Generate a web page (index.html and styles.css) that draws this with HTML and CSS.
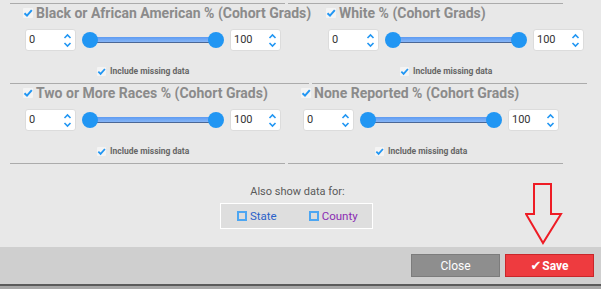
FILE: index.html
```html
<!DOCTYPE html>
<html lang="en">
<head>
  <meta charset="UTF-8">
  <title>Cohort Grads Filters</title>
  <link rel="stylesheet" href="styles.css">
</head>
<body>

<div class="page">
  <div class="main">
    <div class="filters">
      <div class="rule"><span class="seg"></span><span class="seg"></span></div>

      <div class="row">
        <div class="cell">
          <div class="title"><span class="chk"><svg viewBox="0 0 10 10"><path d="M1.5 5.2 L4 7.6 L8.8 2.2"/></svg></span>Black or African American % (Cohort Grads)</div>
          <div class="range">
            <div class="num">0<svg class="spin" viewBox="0 0 9 15"><path d="M1.5 5 L4.5 2 L7.5 5 M1.5 10 L4.5 13 L7.5 10"/></svg></div>
            <div class="slider"><div class="track"></div><span class="knob lo"></span><span class="knob hi"></span></div>
            <div class="num">100<svg class="spin" viewBox="0 0 9 15"><path d="M1.5 5 L4.5 2 L7.5 5 M1.5 10 L4.5 13 L7.5 10"/></svg></div>
          </div>
          <div class="missing"><span class="chk small"><svg viewBox="0 0 10 10"><path d="M1.5 5.2 L4 7.6 L8.8 2.2"/></svg></span>Include missing data</div>
        </div>
        <div class="cell push">
          <div class="title"><span class="chk"><svg viewBox="0 0 10 10"><path d="M1.5 5.2 L4 7.6 L8.8 2.2"/></svg></span>White % (Cohort Grads)</div>
          <div class="range">
            <div class="num">0<svg class="spin" viewBox="0 0 9 15"><path d="M1.5 5 L4.5 2 L7.5 5 M1.5 10 L4.5 13 L7.5 10"/></svg></div>
            <div class="slider"><div class="track"></div><span class="knob lo"></span><span class="knob hi"></span></div>
            <div class="num">100<svg class="spin" viewBox="0 0 9 15"><path d="M1.5 5 L4.5 2 L7.5 5 M1.5 10 L4.5 13 L7.5 10"/></svg></div>
          </div>
          <div class="missing"><span class="chk small"><svg viewBox="0 0 10 10"><path d="M1.5 5.2 L4 7.6 L8.8 2.2"/></svg></span>Include missing data</div>
        </div>
      </div>

      <div class="rule mid"><span class="seg"></span><span class="seg"></span></div>

      <div class="row">
        <div class="cell">
          <div class="title"><span class="chk"><svg viewBox="0 0 10 10"><path d="M1.5 5.2 L4 7.6 L8.8 2.2"/></svg></span>Two or More Races % (Cohort Grads)</div>
          <div class="range">
            <div class="num">0<svg class="spin" viewBox="0 0 9 15"><path d="M1.5 5 L4.5 2 L7.5 5 M1.5 10 L4.5 13 L7.5 10"/></svg></div>
            <div class="slider"><div class="track"></div><span class="knob lo"></span><span class="knob hi"></span></div>
            <div class="num">100<svg class="spin" viewBox="0 0 9 15"><path d="M1.5 5 L4.5 2 L7.5 5 M1.5 10 L4.5 13 L7.5 10"/></svg></div>
          </div>
          <div class="missing"><span class="chk small"><svg viewBox="0 0 10 10"><path d="M1.5 5.2 L4 7.6 L8.8 2.2"/></svg></span>Include missing data</div>
        </div>
        <div class="cell">
          <div class="title"><span class="chk"><svg viewBox="0 0 10 10"><path d="M1.5 5.2 L4 7.6 L8.8 2.2"/></svg></span>None Reported % (Cohort Grads)</div>
          <div class="range">
            <div class="num">0<svg class="spin" viewBox="0 0 9 15"><path d="M1.5 5 L4.5 2 L7.5 5 M1.5 10 L4.5 13 L7.5 10"/></svg></div>
            <div class="slider"><div class="track"></div><span class="knob lo"></span><span class="knob hi"></span></div>
            <div class="num">100<svg class="spin" viewBox="0 0 9 15"><path d="M1.5 5 L4.5 2 L7.5 5 M1.5 10 L4.5 13 L7.5 10"/></svg></div>
          </div>
          <div class="missing"><span class="chk small"><svg viewBox="0 0 10 10"><path d="M1.5 5.2 L4 7.6 L8.8 2.2"/></svg></span>Include missing data</div>
        </div>
      </div>

      <div class="rule"><span class="seg"></span><span class="seg"></span></div>
    </div>

    <div class="also">
      <p class="also-label">Also show data for:</p>
      <div class="also-box">
        <label class="opt state"><span class="box"></span>State</label>
        <label class="opt county"><span class="box"></span>County</label>
      </div>
    </div>

    <svg class="pointer" viewBox="0 0 40 64" width="40" height="64">
      <path d="M9 1 H26 V31 H36 L18 60 L1 31 H9 Z"/>
    </svg>
  </div>

  <div class="footer">
    <button class="btn close">Close</button>
    <button class="btn save"><span class="tick">✔</span>Save</button>
  </div>
  <div class="under"></div>
</div>

</body>
</html>
```

FILE: styles.css
```css
body {
  margin: 0;
  background: #e8e8e8;
  font-family: Roboto, "Liberation Sans", sans-serif;
}

.page {
  width: 601px;
  height: 289px;
  overflow: hidden;
}

.main {
  position: relative;
  height: 247px;
}

/* filter grid */
.filters {
  padding: 3px 0 0 10px;
}

.rule {
  display: flex;
  gap: 3px;
}

.rule .seg {
  display: block;
  width: 275px;
  height: 1px;
  background: #ababab;
}

.rule.mid .seg:first-child {
  width: 299px;
}

.row {
  display: flex;
}

.cell {
  width: 275px;
  height: 79px;
  margin-right: 3px;
}

.cell.push {
  margin-left: 25px;
}

.title {
  display: flex;
  align-items: center;
  padding-left: 13px;
  height: 18px;
  font-size: 14px;
  font-weight: bold;
  color: #8b8b8b;
  white-space: nowrap;
}

.chk {
  display: inline-block;
  flex-shrink: 0;
  width: 10px;
  height: 10px;
  margin-right: 3px;
  background: #f4f4f4;
  border-radius: 1px;
}

.chk svg {
  display: block;
  width: 100%;
  height: 100%;
  fill: none;
  stroke: #2196f3;
  stroke-width: 2;
}

.chk.small {
  width: 9px;
  height: 9px;
  margin-right: 4px;
}

.range {
  display: flex;
  align-items: center;
  gap: 6px;
  padding-left: 15px;
  margin-top: 7px;
}

.num {
  position: relative;
  box-sizing: border-box;
  width: 51px;
  height: 22px;
  padding-left: 3px;
  background: #fff;
  border: 1px solid #dcdcdc;
  border-radius: 3px;
  font-size: 11px;
  line-height: 20px;
  color: #333;
}

.spin {
  position: absolute;
  right: 3px;
  top: 3px;
  width: 9px;
  height: 15px;
  fill: none;
  stroke: #2196f3;
  stroke-width: 1.6;
}

.slider {
  position: relative;
  width: 142px;
  height: 16px;
}

.track {
  position: absolute;
  left: 8px;
  right: 8px;
  top: 5px;
  height: 5px;
  background: linear-gradient(#5d9bf2, #86b5f6);
  border-bottom: 1px solid #4a6796;
}

.knob {
  position: absolute;
  top: 0;
  width: 16px;
  height: 16px;
  border-radius: 50%;
  background: #2196f3;
}

.knob.lo { left: 0; }
.knob.hi { right: 0; }

.missing {
  display: flex;
  align-items: center;
  padding-left: 87px;
  margin-top: 15px;
  font-size: 8.5px;
  font-weight: bold;
  color: #666;
}

/* also show */
.also {
  text-align: center;
  margin-top: 21px;
}

.also-label {
  margin: 0;
  font-size: 11px;
  color: #5a5a5a;
  padding-right: 6px;
}

.also-box {
  display: inline-flex;
  gap: 32px;
  box-sizing: border-box;
  width: 153px;
  height: 26px;
  margin: 5px 0 0 -8px;
  padding: 0 0 0 16px;
  align-items: center;
  background: #dedede;
  border: 1px solid #fff;
  font-size: 11.5px;
}

.opt {
  display: flex;
  align-items: center;
}

.opt .box {
  display: inline-block;
  box-sizing: border-box;
  width: 10px;
  height: 10px;
  margin-right: 3px;
  border: 2px solid #4da6f2;
  background: #dcdcdc;
}

.state { color: #2b62c9; }
.county { color: #8a2bb2; }

.pointer {
  position: absolute;
  left: 525px;
  top: 183px;
  fill: none;
  stroke: #ee1c25;
  stroke-width: 2;
}

/* footer */
.footer {
  display: flex;
  justify-content: flex-end;
  gap: 5px;
  box-sizing: border-box;
  height: 39px;
  padding: 7px 7px 0 0;
  background: #cfcfcf;
  border-bottom: 2px solid #5a5a5a;
}

.under {
  height: 3px;
  background: #a7a7a7;
}

.btn {
  width: 89px;
  height: 23px;
  font-family: Roboto, "Liberation Sans", sans-serif;
  font-size: 12px;
  color: #fff;
  cursor: pointer;
}

.btn.close {
  background: #8e8e8e;
  border: 1px solid #7c7c7c;
}

.btn.save {
  background: #ee3b3f;
  border: 1px solid #c9262a;
  font-weight: bold;
}

.tick {
  font-family: "DejaVu Sans", sans-serif;
  font-size: 13px;
  margin-right: 1px;
}
```
